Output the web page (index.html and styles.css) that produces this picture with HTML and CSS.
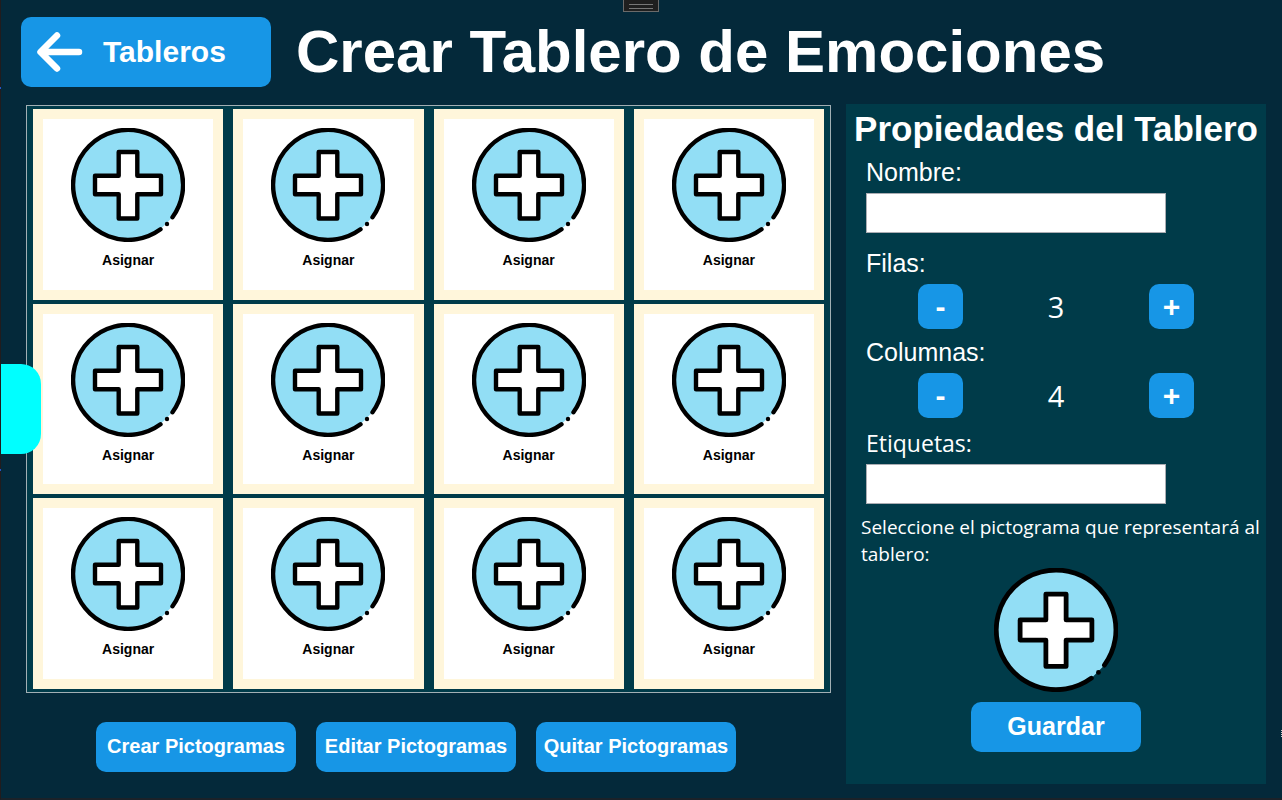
FILE: index.html
```html
<!DOCTYPE html>
<html lang="es">
<head>
<meta charset="utf-8">
<title>Crear Tablero de Emociones</title>
<meta name="viewport" content="width=device-width, initial-scale=1">
<link rel="stylesheet" href="styles.css">
</head>
<body>
<svg class="sprite" aria-hidden="true">
  <symbol id="plus" viewBox="-57 -57 114 114">
    <path d="M32.5 44.3A55 55 0 1 1 44.5 32.3Z" fill="#92def5"/>
    <path d="M32.5 44.3A55 55 0 1 1 44.5 32.3" fill="none" stroke="#000" stroke-width="4.4" stroke-linecap="round"/>
    <circle cx="39" cy="39" r="2.2"/>
    <path d="M-9.300 -33H9.300V-9.300H33V9.300H9.300V33.500H-9.300V9.300H-33V-9.300H-9.300Z" fill="#fff" stroke="#000" stroke-width="4.400" stroke-linejoin="round"/>
  </symbol>
</svg>
<div class="app">
  <div class="window-tab"></div>
  <button class="drawer-tab" type="button" aria-label="Abrir menú"></button>
  <span class="edge-mark edge-mark-top"></span>
  <span class="edge-mark edge-mark-bottom"></span>
  <span class="edge-grip"></span>

  <header class="header">
    <button class="btn back" type="button">
      <svg class="back-icon" viewBox="0 0 46 40" aria-hidden="true"><path d="M20 3.500L3.500 20L20 36.500M4 20H42" fill="none" stroke="#fff" stroke-width="6.500" stroke-linecap="round" stroke-linejoin="round"/></svg>
      <span>Tableros</span>
    </button>
    <h1 class="title">Crear Tablero de Emociones</h1>
  </header>

  <div class="columns">
    <main class="board-area">
      <div class="board">
        <button class="card" type="button"><svg class="card-icon" aria-hidden="true"><use href="#plus"/></svg><span>Asignar</span></button>
        <button class="card" type="button"><svg class="card-icon" aria-hidden="true"><use href="#plus"/></svg><span>Asignar</span></button>
        <button class="card" type="button"><svg class="card-icon" aria-hidden="true"><use href="#plus"/></svg><span>Asignar</span></button>
        <button class="card" type="button"><svg class="card-icon" aria-hidden="true"><use href="#plus"/></svg><span>Asignar</span></button>
        <button class="card" type="button"><svg class="card-icon" aria-hidden="true"><use href="#plus"/></svg><span>Asignar</span></button>
        <button class="card" type="button"><svg class="card-icon" aria-hidden="true"><use href="#plus"/></svg><span>Asignar</span></button>
        <button class="card" type="button"><svg class="card-icon" aria-hidden="true"><use href="#plus"/></svg><span>Asignar</span></button>
        <button class="card" type="button"><svg class="card-icon" aria-hidden="true"><use href="#plus"/></svg><span>Asignar</span></button>
        <button class="card" type="button"><svg class="card-icon" aria-hidden="true"><use href="#plus"/></svg><span>Asignar</span></button>
        <button class="card" type="button"><svg class="card-icon" aria-hidden="true"><use href="#plus"/></svg><span>Asignar</span></button>
        <button class="card" type="button"><svg class="card-icon" aria-hidden="true"><use href="#plus"/></svg><span>Asignar</span></button>
        <button class="card" type="button"><svg class="card-icon" aria-hidden="true"><use href="#plus"/></svg><span>Asignar</span></button>
      </div>
      <div class="actions">
        <button class="btn action" type="button">Crear Pictogramas</button>
        <button class="btn action" type="button">Editar Pictogramas</button>
        <button class="btn action" type="button">Quitar Pictogramas</button>
      </div>
    </main>

    <aside class="panel">
      <h2 class="panel-title">Propiedades del Tablero</h2>
      <div class="field">
        <label class="label" for="nombre">Nombre:</label>
        <input class="text-input" id="nombre" type="text">
      </div>
      <div class="field field-rows" role="group" aria-labelledby="filas">
        <span class="label" id="filas">Filas:</span>
        <div class="stepper">
          <button class="btn step" type="button">-</button>
          <output class="value">3</output>
          <button class="btn step" type="button">+</button>
        </div>
      </div>
      <div class="field field-columns" role="group" aria-labelledby="columnas">
        <span class="label" id="columnas">Columnas:</span>
        <div class="stepper">
          <button class="btn step" type="button">-</button>
          <output class="value">4</output>
          <button class="btn step" type="button">+</button>
        </div>
      </div>
      <div class="field field-tags">
        <label class="label label-tags" for="etiquetas">Etiquetas:</label>
        <input class="text-input" id="etiquetas" type="text">
      </div>
      <p class="hint">Seleccione el pictograma que representará al tablero:</p>
      <button class="picker" type="button" aria-label="Seleccionar pictograma"><svg class="picker-icon" aria-hidden="true"><use href="#plus"/></svg></button>
      <button class="btn save" type="button">Guardar</button>
    </aside>
  </div>
</div>
</body>
</html>
```

FILE: styles.css
```css
* {
  box-sizing: border-box;
}

body {
  margin: 0;
  background: #04293a;
  color: #fff;
  font-family: "Liberation Sans", Arial, sans-serif;
}

button {
  padding: 0;
  border: 0;
  font-family: inherit;
  cursor: pointer;
}

.sprite {
  position: absolute;
  width: 0;
  height: 0;
}

.app {
  position: relative;
  display: flex;
  flex-direction: column;
  min-height: 100vh;
  padding-bottom: 14px;
  border-left: 1px solid #211c1e;
  border-bottom: 2px solid #1b2229;
}

.window-tab {
  position: absolute;
  top: 0;
  left: 622px;
  width: 36px;
  height: 12px;
  padding: 4px 5px;
  border: 1px solid #6a6a6a;
  border-top: 0;
  background: #1f1f1f;
}

.window-tab::before {
  content: "";
  display: block;
  height: 3px;
  border-top: 1px solid #777;
  border-bottom: 1px solid #777;
}

.drawer-tab {
  position: absolute;
  top: 364px;
  left: 0;
  width: 40px;
  height: 90px;
  border-radius: 0 20px 20px 0;
  background: #0ff;
}

.edge-mark {
  position: absolute;
  left: -1px;
  width: 1px;
  height: 2px;
  background: #2457c8;
}

.edge-mark-top {
  top: 87px;
}

.edge-mark-bottom {
  top: 469px;
}

.edge-grip {
  position: absolute;
  top: 730px;
  right: 0;
  width: 1px;
  height: 7px;
  background: repeating-linear-gradient(#ccc 0 1px, transparent 1px 2px);
}

.btn {
  border-radius: 10px;
  background: #1796e6;
  color: #fff;
  font-weight: bold;
}

.header {
  display: flex;
  align-items: center;
  gap: 25px;
  padding: 17px 20px;
}

.back {
  display: flex;
  align-items: center;
  gap: 20px;
  flex: none;
  width: 250px;
  height: 70px;
  padding-left: 16px;
  font-size: 30px;
}

.back-icon {
  width: 46px;
  height: 40px;
}

.title {
  margin: 0;
  font-size: 60px;
  line-height: 70px;
}

.columns {
  display: flex;
  flex: 1;
  gap: 15px;
  padding-right: 16px;
}

.board-area {
  display: flex;
  flex: 1;
  flex-direction: column;
  min-width: 0;
}

.board {
  display: grid;
  flex: 1;
  grid-template-columns: repeat(4, 1fr);
  grid-auto-rows: 1fr;
  gap: 4px 10px;
  margin: 1px 0 0 25px;
  padding: 3px 6px;
  border: 1px solid #a2afb4;
  background: #003b49;
}

.card {
  display: flex;
  flex-direction: column;
  align-items: center;
  justify-content: flex-start;
  gap: 8px;
  padding-top: 9px;
  border: 10px solid #fff6db;
  background: #fff;
  color: #000;
  font-size: 14px;
  font-weight: bold;
  line-height: 20px;
}

.card-icon {
  width: 114px;
  height: 114px;
}

.actions {
  display: flex;
  justify-content: center;
  gap: 20px;
  padding: 29px 0 12px;
}

.action {
  width: 200px;
  height: 50px;
  padding-bottom: 2px;
  font-size: 20px;
}

.panel {
  flex: none;
  width: 420px;
  background: #003b49;
}

.panel-title {
  margin: 0;
  font-size: 35px;
  line-height: 49px;
  text-align: center;
  white-space: nowrap;
}

.field {
  padding: 0 20px;
}

.field-rows {
  margin-top: 11px;
}

.field-columns {
  margin-top: 4px;
}

.field-tags {
  margin-top: 6px;
}

.label {
  display: block;
  padding-bottom: 2px;
  font-size: 25px;
  line-height: 38px;
}

.label-tags {
  font-family: "Open Sans", "Noto Sans", sans-serif;
  font-size: 23px;
}

.text-input {
  display: block;
  width: 300px;
  height: 40px;
  padding: 0 8px;
  border: 1px solid #abadb3;
  background: #fff;
  font-size: 24px;
}

.stepper {
  display: flex;
  align-items: center;
  justify-content: space-between;
  padding: 0 52px;
}

.step {
  width: 45px;
  height: 45px;
  font-size: 30px;
}

.value {
  font-family: "Open Sans", "Noto Sans", sans-serif;
  font-size: 29px;
  line-height: 45px;
}

.hint {
  margin: 10px 0 0;
  padding-left: 15px;
  font-family: "Open Sans", "Noto Sans", sans-serif;
  font-size: 19px;
  line-height: 27px;
}

.picker {
  display: block;
  margin: 0 auto 10px;
  background: none;
}

.picker-icon {
  display: block;
  width: 124px;
  height: 124px;
}

.save {
  display: block;
  width: 170px;
  height: 50px;
  margin: 0 auto;
  padding-bottom: 2px;
  font-size: 25px;
}
```
